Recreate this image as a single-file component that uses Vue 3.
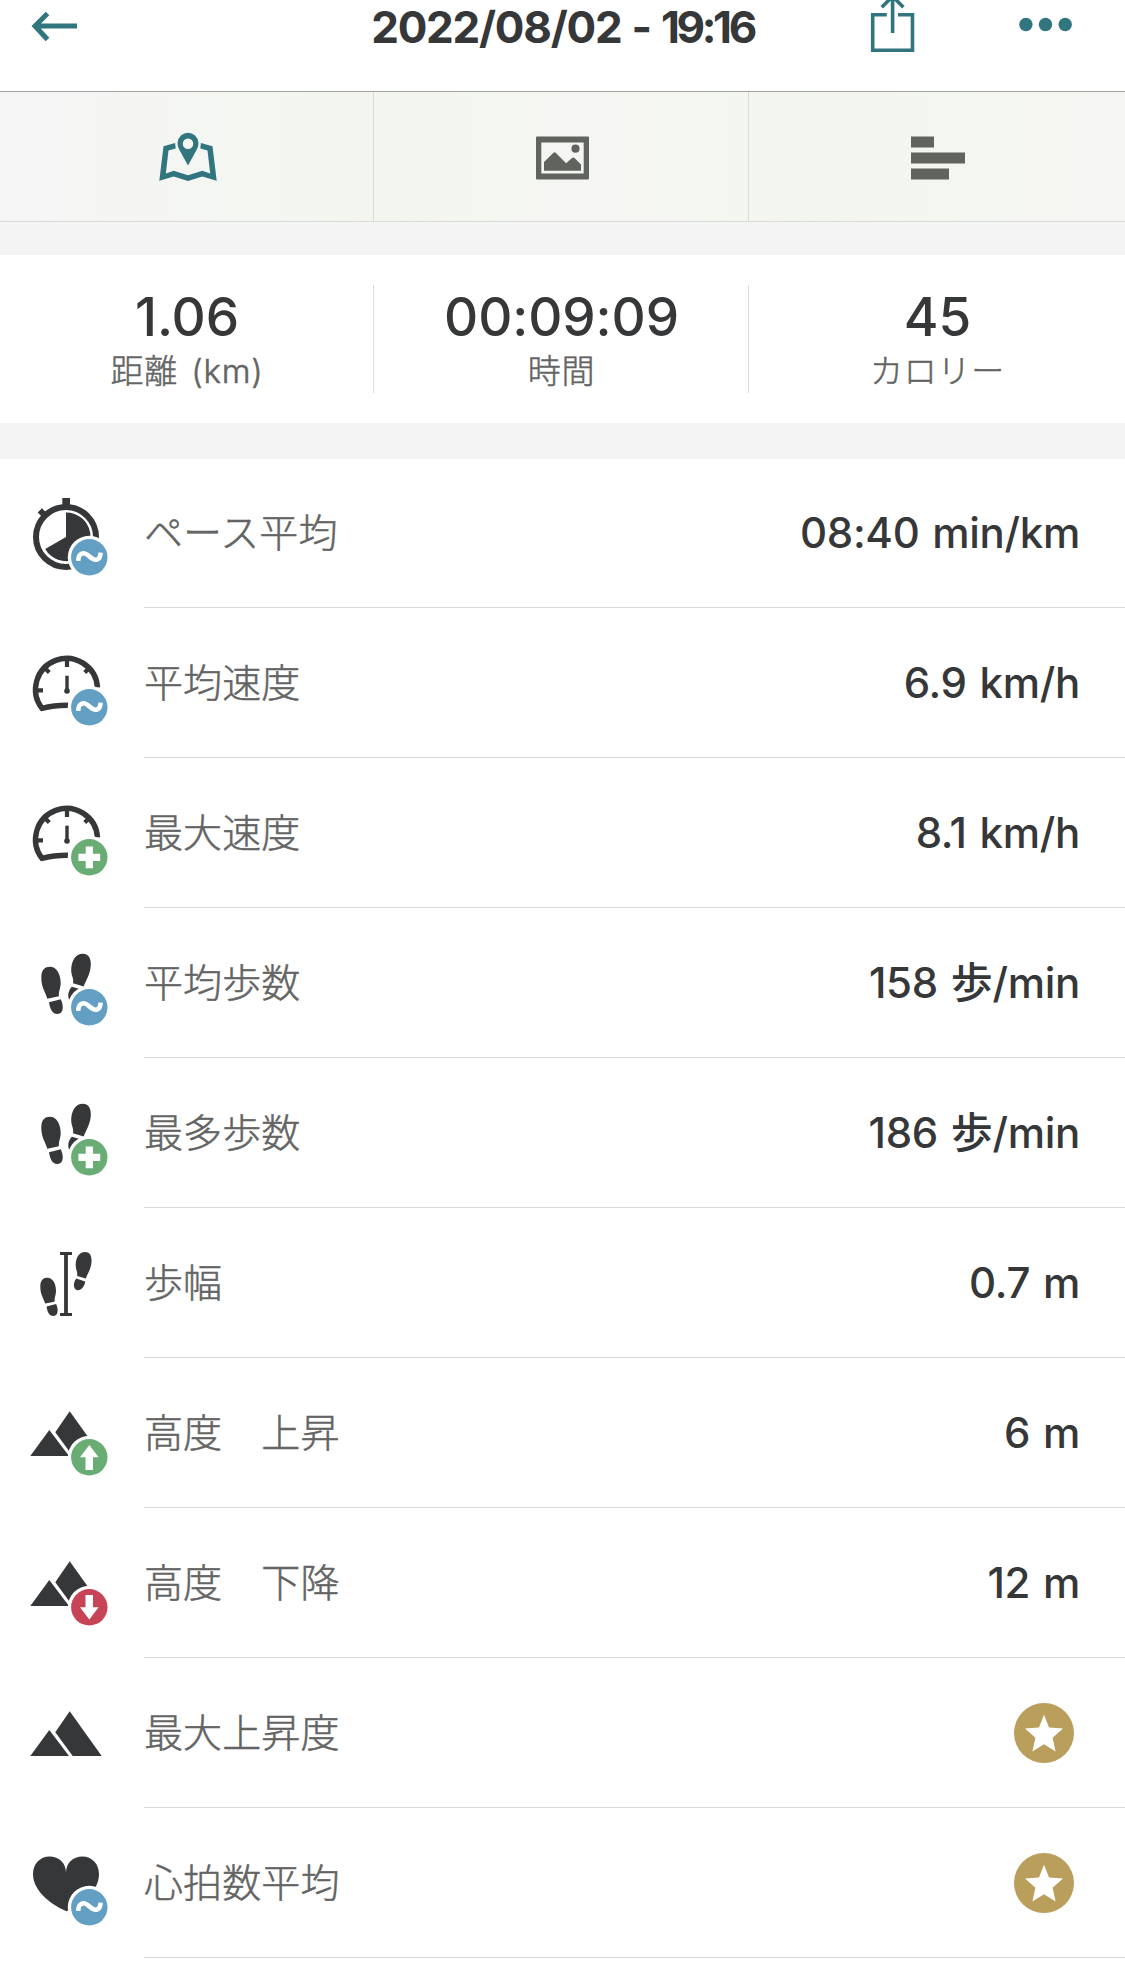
<script setup>
import { ref } from "vue";

const activeTab = ref("map");

const summary = [
  { value: "1.06", label: "距離 (km)" },
  { value: "00:09:09", label: "時間" },
  { value: "45", label: "カロリー" },
];

const stats = [
  { icon: "stopwatch", badge: "average", label: "ペース平均", value: "08:40 min/km" },
  { icon: "gauge", badge: "average", label: "平均速度", value: "6.9 km/h" },
  { icon: "gauge", badge: "plus", label: "最大速度", value: "8.1 km/h" },
  { icon: "steps", badge: "average", label: "平均歩数", value: "158 歩/min" },
  { icon: "steps", badge: "plus", label: "最多歩数", value: "186 歩/min" },
  { icon: "stride", label: "歩幅", value: "0.7 m" },
  { icon: "mountain", badge: "up", label: "高度　上昇", value: "6 m" },
  { icon: "mountain", badge: "down", label: "高度　下降", value: "12 m" },
  { icon: "mountain", label: "最大上昇度", premium: true },
  { icon: "heart", badge: "average", label: "心拍数平均", premium: true },
];
</script>

<template>
  <div class="workout">
    <header class="header">
      <button
        type="button"
        class="header__button"
        aria-label="戻る"
      >
        <svg class="header__back" viewBox="0 0 80 60">
          <path d="M77 26H36M47.5 13.5L35 26L47.5 39.5" />
        </svg>
      </button>

      <h1 class="header__title">2022/08/02 - <span class="header__time">19:16</span></h1>

      <div class="header__actions">
        <button
          type="button"
          class="header__button"
          aria-label="共有"
        >
          <svg class="header__share" viewBox="860 0 66 60">
            <path d="M886.8 14.7H872.7V50.3H912.5V14.7H898M892.6 33V-2M881.8 7.2L892.6 -3.6L903.4 7.2" />
          </svg>
        </button>
        <button
          type="button"
          class="header__button"
          aria-label="メニュー"
        >
          <svg class="header__menu" viewBox="1006 0 79 60">
            <circle cx="1025.9" cy="24.5" r="6.7" />
            <circle cx="1045.5" cy="24.5" r="6.7" />
            <circle cx="1065.2" cy="24.5" r="6.7" />
          </svg>
        </button>
      </div>
    </header>

    <nav class="tabs">
      <button
        type="button"
        class="tabs__item"
        :class="{ 'tabs__item--active': activeTab === 'map' }"
        aria-label="地図"
        @click="activeTab = 'map'"
      >
        <svg class="tabs__icon" viewBox="146.5 116.5 80 80">
          <path d="M174.6 142.5L163 145.7L158.8 180.3L173.2 176L187.5 180.5L201.8 176L216.2 180.3L212 145.7L200.4 142.5L199.8 147.9L207 150L209.7 173L201.8 170.2L187.5 174.7L173.2 170.2L165.3 173L168 150L175.2 147.9Z" />
          <path
            fill-rule="evenodd"
            d="M187.5 165L179 149.5A10.5 10.9 0 1 1 196 149.5ZM187.5 138A5.3 5.3 0 1 0 187.5 148.6A5.3 5.3 0 1 0 187.5 138Z"
          />
        </svg>
      </button>
      <button
        type="button"
        class="tabs__item"
        :class="{ 'tabs__item--active': activeTab === 'photos' }"
        aria-label="写真"
        @click="activeTab = 'photos'"
      >
        <svg class="tabs__icon" viewBox="521 116.5 80 80">
          <path
            fill-rule="evenodd"
            d="M537 136H588Q589 136 589 137V178Q589 179 588 179H537Q536 179 536 178V137Q536 136 537 136ZM541.3 142V173H583.7V142Z"
          />
          <path d="M544 170.3V161.5L553.5 152.3Q554.6 151.3 555.7 152.3L566.1 162.7L572 157.5Q573.3 156.5 574.5 157.5L581 163.9V170.3Z" />
          <circle cx="575.5" cy="148.2" r="4.1" />
        </svg>
      </button>
      <button
        type="button"
        class="tabs__item"
        :class="{ 'tabs__item--active': activeTab === 'details' }"
        aria-label="詳細"
        @click="activeTab = 'details'"
      >
        <svg class="tabs__icon" viewBox="897 116.5 80 80">
          <path d="M911 136H934V147H911ZM911 152H965V163H911ZM911 168H949V179H911Z" />
        </svg>
      </button>
    </nav>

    <section class="summary">
      <div
        v-for="item in summary"
        :key="item.label"
        class="summary__item"
      >
        <div class="summary__value">{{ item.value }}</div>
        <div class="summary__label">{{ item.label }}</div>
      </div>
    </section>

    <ul class="stats">
      <li
        v-for="stat in stats"
        :key="stat.label"
        class="stat"
      >
        <svg class="stat__icon" viewBox="0 0 144 149">
          <g v-if="stat.icon === 'stopwatch'">
            <circle class="line" cx="66" cy="79" r="30" stroke-width="6" />
            <path d="M62.3 40H70V49H62.3Z" />
            <path class="line" d="M39.8 52.3L45 57.5" stroke-width="6" />
            <path d="M66 79V54.5A24.3 24.3 0 1 1 45.2 91Z" />
          </g>
          <g v-else-if="stat.icon === 'gauge'">
            <path
              class="line"
              d="M97.5 79.5A31 31 0 1 0 42 100.3Q54 97.2 68.3 97.3"
              stroke-width="5.4"
            />
            <path
              class="line"
              d="M67 52V59M36 82.3H43M45 60.3L49.3 64.6M89 60.3L84.7 64.6"
              stroke-width="4.2"
            />
            <path class="line" d="M67 67.7V83" stroke-width="3.4" />
            <circle cx="67" cy="83" r="2.8" />
          </g>
          <g v-else-if="stat.icon === 'steps'">
            <path d="M47.3 90.7C45.5 84 41.3 80 41.3 69.5C41.3 61.5 45 58.7 50 58.7C56.5 58.7 60.7 66 60.7 75C60.7 80 58.5 83 58.9 88.3Z" />
            <path d="M49 94.2L60.8 91.3C63.8 98 63.8 105.6 57.5 106C51.5 106 50 100 49 94.2Z" />
            <path d="M73 75.3C74 70 71.2 68 71.2 62C71.2 53 75.5 45.7 82.7 45.7C88.5 45.7 91 50 90.8 57C90.5 66 86 72 83.7 78.5Z" />
            <path d="M71.8 78.8L83 82C82 90 77 95 72 94C67 92 67 84 71.8 78.8Z" />
          </g>
          <g v-else-if="stat.icon === 'stride'">
            <path d="M60 44H72V47H67.9V105H72V108H60V105H64.1V47H60Z" />
            <g transform="translate(6.85 22.15) scale(0.81)">
              <path d="M47.3 90.7C45.5 84 41.3 80 41.3 69.5C41.3 61.5 45 58.7 50 58.7C56.5 58.7 60.7 66 60.7 75C60.7 80 58.5 83 58.9 88.3Z" />
              <path d="M49 94.2L60.8 91.3C63.8 98 63.8 105.6 57.5 106C51.5 106 50 100 49 94.2Z" />
            </g>
            <g transform="translate(18 7) scale(0.81)">
              <path d="M73 75.3C74 70 71.2 68 71.2 62C71.2 53 75.5 45.7 82.7 45.7C88.5 45.7 91 50 90.8 57C90.5 66 86 72 83.7 78.5Z" />
              <path d="M71.8 78.5L83 82C82 89 77 94 72.5 92.5C68 91 68 84 71.8 78.5Z" />
            </g>
          </g>
          <g v-else-if="stat.icon === 'mountain'">
            <path d="M30.3 98L49.3 72L69 98Z" />
            <path d="M55.3 74.3L69.7 53.3L101.7 98H72.7Z" />
          </g>
          <path
            v-else
            d="M66 64.7C66 55 59 48.5 49.5 48.5C40 48.5 33 56 33 66C33 84 53 97.5 66.5 103.3C80 97.5 99 84 99 66C99 56 92 48.5 82.5 48.5C73 48.5 66 55 66 64.7Z"
          />

          <g v-if="stat.badge">
            <circle class="ring" cx="89.3" cy="99.3" r="21.5" />
            <circle
              class="badge"
              :class="`badge--${stat.badge}`"
              cx="89.3"
              cy="99.3"
              r="18.2"
            />
            <path
              v-if="stat.badge === 'average'"
              class="badge__wave"
              d="M78.2 102.9C78.5 95.5 83 92.7 89.2 98.3C95.5 104 100.3 102.3 100.6 94.7"
            />
            <path
              v-else-if="stat.badge === 'plus'"
              class="badge__mark"
              d="M85.7 88.4H93V95.7H100.2V103H93V110.2H85.7V103H78.4V95.7H85.7Z"
            />
            <path
              v-else-if="stat.badge === 'up'"
              class="badge__mark"
              d="M89.3 87L98.6 99.3H93V112H85.5V99.3H80Z"
            />
            <path
              v-else
              class="badge__mark"
              d="M89.3 111.5L98.6 99.3H93V87H85.5V99.3H80Z"
            />
          </g>
        </svg>

        <div class="stat__body">
          <span class="stat__label">{{ stat.label }}</span>
          <svg
            v-if="stat.premium"
            class="stat__premium"
            viewBox="-30 -30 60 60"
          >
            <circle r="30" />
            <path
              class="badge__mark"
              d="M0 -18.3L5 -5.5L19 -4.4L8.6 4.8L11.6 18.6L0 11.2L-11.6 18.6L-8.6 4.8L-19 -4.4L-5 -5.5Z"
            />
          </svg>
          <span v-else class="stat__value">{{ stat.value }}</span>
        </div>
      </li>
    </ul>
  </div>
</template>

<style>
body {
  margin: 0;
  background-color: #fff;
}
</style>

<style scoped>
.workout {
  width: 1125px;
  height: 1972px;
  overflow: hidden;
  background-color: #f4f4f4;
  color: #363739;
  font-family: Inter, "Noto Sans CJK JP", sans-serif;
}

button {
  border: 0;
  padding: 0;
  background: none;
  cursor: pointer;
}

svg {
  display: block;
}

.header {
  display: grid;
  grid-template-columns: 1fr auto 1fr;
  height: 91px;
  border-bottom: 1px solid #a3a6a2;
  background-color: #fff;
}

.header__button {
  align-self: start;
  justify-self: start;
}

.header__back {
  width: 80px;
  height: 60px;
  fill: none;
  stroke: #31757f;
  stroke-width: 5;
}

.header__title {
  margin: 0;
  font-size: 44px;
  font-weight: 700;
  letter-spacing: -1.25px;
  line-height: 55px;
  white-space: nowrap;
  word-spacing: 1px;
}

.header__time {
  letter-spacing: -3.4px;
}

.header__actions {
  display: flex;
  justify-content: flex-end;
  gap: 80px;
  padding-right: 40px;
}

.header__share {
  width: 66px;
  height: 60px;
  fill: none;
  stroke: #31757f;
  stroke-width: 3.6;
}

.header__menu {
  width: 79px;
  height: 60px;
  fill: #31757f;
}

.tabs {
  display: grid;
  grid-template-columns: 374px 375px 1fr;
  height: 129px;
  border-bottom: 1px solid #d9dcd6;
  background: linear-gradient(90deg, #f5f5f5 0%, #f4f6f2 20%, #f3f6ee 36%, #f5f6f3 52%, #f3f6ee 72%, #f5f6f3 100%);
}

.tabs__item {
  display: flex;
  align-items: center;
  justify-content: center;
  border-right: 1px solid #d9dcd6;
  fill: #61635f;
}

.tabs__item:last-child {
  border-right: 0;
}

.tabs__item--active {
  fill: #31757f;
}

.tabs__icon {
  width: 80px;
  height: 80px;
}

.summary {
  display: grid;
  grid-template-columns: 374px 375px 1fr;
  margin-top: 33px;
  padding: 30px 0;
  background-color: #fff;
  text-align: center;
}

.summary__item {
  height: 108px;
  border-right: 1px solid #dcdddc;
  padding-left: 1px;
}

.summary__item:last-child {
  border-right: 0;
}

.summary__value {
  font-size: 53px;
  font-weight: 500;
  letter-spacing: -0.1px;
  line-height: 65px;
}

.summary__label {
  color: #636463;
  font-size: 33px;
  font-weight: 300;
  letter-spacing: 0.8px;
  line-height: 43px;
  word-spacing: 3px;
  -webkit-text-stroke: 0.5px #636463;
}

.stats {
  margin: 35px 0 0;
  padding: 0;
  height: 1514px;
  background-color: #fff;
  box-shadow: inset 0 1px 0 #f4f4f4;
  list-style: none;
}

.stat {
  display: flex;
  height: 150px;
}

.stat__icon {
  flex: none;
  width: 144px;
  height: 149px;
  fill: #363739;
}

.line {
  fill: none;
  stroke: #363739;
}

.ring,
.badge__mark {
  fill: #fff;
}

.badge--average {
  fill: #629fc2;
}

.badge--plus,
.badge--up {
  fill: #69ad74;
}

.badge--down {
  fill: #c64455;
}

.badge__wave {
  fill: none;
  stroke: #fff;
  stroke-width: 4.6;
}

.stat__body {
  flex: 1;
  display: flex;
  align-items: center;
  justify-content: space-between;
  border-bottom: 1px solid #d8d9d8;
  padding-right: 45px;
}

.stat__label {
  padding-bottom: 5px;
  color: #636463;
  font-family: "Noto Sans CJK JP", sans-serif;
  font-size: 39px;
  font-weight: 300;
  letter-spacing: 0.1px;
  line-height: 56px;
  -webkit-text-stroke: 0.5px #636463;
}

.stat__value {
  font-size: 42px;
  font-weight: 500;
  letter-spacing: -0.3px;
  line-height: 50px;
  word-spacing: 2px;
}

.stat__premium {
  width: 60px;
  height: 60px;
  margin-right: 6px;
  fill: #b99f5b;
}
</style>
